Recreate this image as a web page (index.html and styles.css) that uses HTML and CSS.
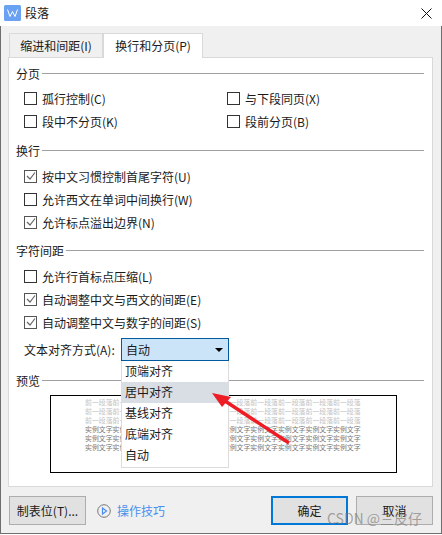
FILE: index.html
```html
<!DOCTYPE html>
<html lang="zh">
<head>
  <meta charset="UTF-8">
  <title>段落</title>
  <link rel="stylesheet" href="styles.css">
</head>
<body>
<div class="dialog">
  <!-- 标题栏 -->
  <div class="titlebar">
    <svg class="app-icon" width="17" height="16" viewBox="0 0 17 16">
      <rect width="17" height="16" rx="1.500" fill="#6ba1f2"/>
      <path d="M3.500 4.500l2.500 7L8.500 6.500l2.500 5 2.500-7" fill="none" stroke="#fff" stroke-width="1"/>
    </svg>
    <span class="title">段落</span>
    <svg class="close" width="11" height="11" viewBox="0 0 11 11">
      <path d="M.5.5l10 10M10.500.5l-10 10" stroke="#111" stroke-width="1"/>
    </svg>
  </div>

  <div class="content">
    <div class="tabs">
      <div class="tab">缩进和间距(I)</div>
      <div class="tab active">换行和分页(P)</div>
    </div>

    <div class="panel">
      <!-- 分页 -->
      <div class="group-title"><span>分页</span></div>
      <div class="rows two-col first">
        <label class="row"><i class="box"></i>孤行控制(C)</label>
        <label class="row"><i class="box"></i>与下段同页(X)</label>
        <label class="row"><i class="box"></i>段中不分页(K)</label>
        <label class="row"><i class="box"></i>段前分页(B)</label>
      </div>

      <!-- 换行 -->
      <div class="group-title gap-a"><span>换行</span></div>
      <div class="rows">
        <label class="row"><i class="box on"><svg width="10" height="10" viewBox="0 0 10 10"><path d="M1 5l3 3 5-6.500" fill="none" stroke="#666" stroke-width="1.200"/></svg></i>按中文习惯控制首尾字符(U)</label>
        <label class="row"><i class="box"></i>允许西文在单词中间换行(W)</label>
        <label class="row"><i class="box on"><svg width="10" height="10" viewBox="0 0 10 10"><path d="M1 5l3 3 5-6.500" fill="none" stroke="#666" stroke-width="1.200"/></svg></i>允许标点溢出边界(N)</label>
      </div>

      <!-- 字符间距 -->
      <div class="group-title gap-c"><span>字符间距</span></div>
      <div class="rows">
        <label class="row"><i class="box"></i>允许行首标点压缩(L)</label>
        <label class="row"><i class="box on"><svg width="10" height="10" viewBox="0 0 10 10"><path d="M1 5l3 3 5-6.500" fill="none" stroke="#666" stroke-width="1.200"/></svg></i>自动调整中文与西文的间距(E)</label>
        <label class="row"><i class="box on"><svg width="10" height="10" viewBox="0 0 10 10"><path d="M1 5l3 3 5-6.500" fill="none" stroke="#666" stroke-width="1.200"/></svg></i>自动调整中文与数字的间距(S)</label>
      </div>

      <div class="align-row">
        <span class="align-label">文本对齐方式(A):</span>
        <div class="select">
          <span>自动</span>
          <i class="caret"></i>
          <ul class="options">
            <li>顶端对齐</li>
            <li class="hover">居中对齐</li>
            <li>基线对齐</li>
            <li>底端对齐</li>
            <li>自动</li>
          </ul>
        </div>
      </div>

      <!-- 预览 -->
      <div class="group-title gap-b"><span>预览</span></div>
      <div class="preview">
        <p class="before">前一段落前一段落前一段落前一段落前一段落前一段落前一段落前一段落前一段落前一段落</p>
        <p class="before">前一段落前一段落前一段落前一段落前一段落前一段落前一段落前一段落前一段落前一段落</p>
        <p class="before">前一段落前一段落前一段落前一段落前一段落前一段落前一段落前一段落前一段落前一段落</p>
        <p>实例文字实例文字实例文字实例文字实例文字实例文字实例文字实例文字实例文字实例文字</p>
        <p>实例文字实例文字实例文字实例文字实例文字实例文字实例文字实例文字实例文字实例文字</p>
        <p>实例文字实例文字实例文字实例文字实例文字实例文字实例文字实例文字实例文字实例文字</p>
      </div>
    </div>

    <div class="footer">
      <button class="btn">制表位(T)...</button>
      <a class="tips">
        <svg width="14" height="14" viewBox="0 0 14 14">
          <circle cx="7" cy="7" r="6.300" fill="none" stroke="#777" stroke-width="1"/>
          <path d="M5.500 4l4 3-4 3z" fill="none" stroke="#4a8fee" stroke-width="1.200"/>
        </svg>
        操作技巧
      </a>
      <button class="btn primary">确定</button>
      <button class="btn">取消</button>
    </div>
  </div>

  <!-- 截图上的标注箭头 -->
  <svg class="arrow" width="100" height="70" viewBox="0 0 100 70">
    <path d="M79 53L12 9" stroke="#ee1c25" stroke-width="3.500"/>
    <path d="M2 3L21 7L12 17z" fill="#ee1c25"/>
  </svg>
  <span class="watermark">CSDN @三皮仔</span>
</div>
</body>
</html>
```

FILE: styles.css
```css
* {
  box-sizing: border-box;
}
body {
  margin: 0;
  background: #fff;
  font-family: "Noto Sans CJK SC", "Noto Sans", sans-serif;
  font-size: 12px;
  color: #1a1a1a;
}
.dialog {
  position: relative;
  display: flex;
  flex-direction: column;
  width: 442px;
  height: 534px;
  overflow: hidden;
}
/* 标题栏 */
.titlebar {
  display: flex;
  align-items: center;
  height: 26px;
  padding: 0 10px 0 4px;
  background: #fff;
}
.title {
  margin: 0 0 2px 4px;
}
.close {
  margin-left: auto;
}
.content {
  flex: 1;
  padding: 7px 8px 0 7px;
  background: #f0f0f0;
  border: 1px solid #6e6e6e;
  border-top: none;
}
/* 标签页 */
.tabs {
  display: flex;
  align-items: flex-end;
  height: 24px;
  padding-left: 1px;
}
.tab {
  width: 94px;
  height: 24px;
  line-height: 23px;
  text-align: center;
  border: 1px solid #d9d9d9;
  border-bottom: none;
}
.tab.active {
  position: relative;
  z-index: 1;
  width: 100px;
  height: 25px;
  margin-bottom: -1px;
  background: #fff;
}
.panel {
  height: 430px;
  padding: 7px 8px 0 7px;
  background: #fff;
  border: 1px solid #d9d9d9;
}
.group-title {
  display: flex;
  align-items: center;
  height: 16px;
}
.group-title::after {
  content: "";
  flex: 1;
  height: 1px;
  margin-left: 2px;
  background: #a0a0a0;
}
.gap-a {
  margin-top: 9px;
}
.gap-c {
  margin-top: 8px;
}
.gap-b {
  margin-top: 11px;
}
.rows {
  margin-top: 7px;
  padding-left: 8px;
}
.rows.first {
  margin-top: 6px;
}
.two-col {
  display: grid;
  grid-template-columns: 203px 1fr;
}
.row {
  display: flex;
  align-items: center;
  height: 23px;
  padding-bottom: 1px;
}
.box {
  display: flex;
  align-items: center;
  justify-content: center;
  width: 13px;
  height: 13px;
  margin-right: 5px;
  background: #fff;
  border: 1px solid #333;
}
.box.on {
  border-color: #555;
}
/* 对齐方式 */
.align-row {
  display: flex;
  align-items: center;
  height: 23px;
  margin-top: 4px;
  padding-left: 8px;
}
.align-label {
  width: 97px;
}
.select {
  position: relative;
  display: flex;
  align-items: center;
  justify-content: space-between;
  width: 108px;
  height: 23px;
  padding: 0 5px 0 4px;
  background: #cce4f7;
  border: 1px solid #005a9e;
}
.caret {
  width: 0;
  height: 0;
  border: 4px solid transparent;
  border-top: 4px solid #000;
  border-bottom: none;
}
.options {
  position: absolute;
  z-index: 2;
  top: 22px;
  left: -1px;
  width: 108px;
  margin: 0;
  padding: 0 0 1px;
  list-style: none;
  background: #fff;
  border: 1px solid #dcdcdc;
  border-top: none;
}
.options li {
  height: 21px;
  line-height: 20px;
  padding-left: 3px;
}
.options .hover {
  background: #d9dde4;
}
/* 预览 */
.preview {
  height: 78px;
  margin: 7px 27px 0 34px;
  padding: 2px 0 0 34px;
  background: #fff;
  border: 1px solid #000;
  overflow: hidden;
}
.preview p {
  margin: 0;
  height: 9px;
  font-size: 6.900px;
  line-height: 9px;
  white-space: nowrap;
  color: #777;
}
.preview p.before {
  color: #c2c2c2;
}
/* 底部按钮 */
.footer {
  display: flex;
  align-items: center;
  margin-top: 9px;
  padding-left: 1px;
}
.btn {
  width: 77px;
  height: 29px;
  padding: 0;
  font: inherit;
  color: inherit;
  background: #e1e1e1;
  border: 1px solid #adadad;
}
.btn + .btn {
  margin-left: 8px;
}
.primary {
  margin-left: auto;
  border: 2px solid #0078d7;
}
.tips {
  display: flex;
  align-items: center;
  gap: 6px;
  margin-left: 11px;
  color: #4a8fee;
}
.arrow {
  position: absolute;
  z-index: 3;
  top: 390px;
  left: 210px;
}
.watermark {
  position: absolute;
  z-index: 3;
  top: 508px;
  left: 327px;
  font-size: 14px;
  white-space: nowrap;
  color: rgba(120, 120, 120, 0.65);
}
```
